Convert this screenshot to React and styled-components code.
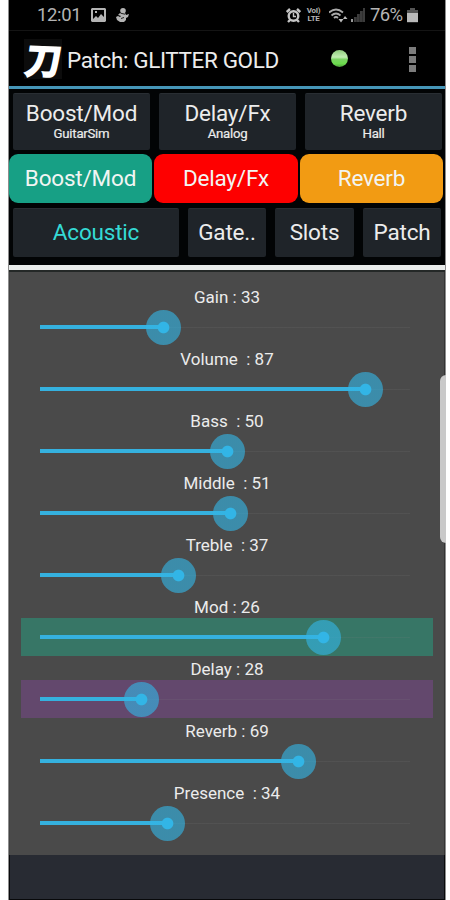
import React from "react";
import styled, { createGlobalStyle } from "styled-components";

const Global = createGlobalStyle`
  *, *::before, *::after { box-sizing: border-box; }
  html, body { margin: 0; padding: 0; background: #fff; }
  body { font-family: Roboto, "Liberation Sans", sans-serif; color: #ececec; overflow: hidden; }
`;

const Page = styled.div`
  width: 450px;
  height: 900px;
  padding: 0 4px 0 8px;
  overflow: hidden;
`;

const Phone = styled.main`
  position: relative;
  height: 900px;
  background: #000;
  border-left: 1px solid #8d8d8d;
  border-right: 1px solid #8d8d8d;
  display: flex;
  flex-direction: column;
`;

const StatusBar = styled.header`
  height: 31px;
  flex: none;
  display: flex;
  align-items: center;
  padding: 0 27px 0 28px;
  border-bottom: 1px solid #141414;
  color: #b4b4b4;
`;

const Clock = styled.span`
  width: 54px;
  font-size: 18.5px;
  line-height: 30px;
  letter-spacing: -0.35px;
`;

const StatusIcon = styled.svg`
  display: block;
  flex: none;
  width: ${(p) => p.$w}px;
  height: ${(p) => p.$h}px;
  margin-right: ${(p) => p.$gap || 0}px;
`;

const Spacer = styled.div`
  flex: 1;
`;

const Volte = styled.div`
  width: 15px;
  margin: 0 8px 0 5px;
  font-size: 8px;
  line-height: 8px;
  font-weight: 700;
  text-align: center;
  letter-spacing: -0.3px;
  white-space: nowrap;
`;

const Battery = styled.span`
  width: 33px;
  margin: 0 4px 0 5px;
  font-size: 18.5px;
  line-height: 30px;
  letter-spacing: -0.7px;
  white-space: nowrap;
`;

const TitleBar = styled.div`
  height: 58px;
  flex: none;
  display: flex;
  align-items: center;
  padding: 0 29px 0 15px;
  border-bottom: 3px solid #4696b8;
`;

const Logo = styled.div`
  width: 38px;
  height: 40px;
  background: #0c0c0c;
  display: flex;
  align-items: center;
  justify-content: center;
`;

const Kanji = styled.span`
  font-family: "Noto Sans CJK JP", sans-serif;
  font-weight: 700;
  font-size: 36px;
  line-height: 54px;
  color: #fff;
  -webkit-text-stroke: 1.6px #fff;
  paint-order: stroke;
  transform: translate(1px, -1px) skewX(-6deg) rotate(2deg);
`;

const Title = styled.h1`
  margin: 2px 0 0 5px;
  width: 264px;
  font-size: 22.5px;
  font-weight: 400;
  letter-spacing: -0.38px;
  white-space: nowrap;
`;

const Led = styled.div`
  width: 17px;
  height: 17px;
  border-radius: 50%;
  background: linear-gradient(#8fcb7d 0%, #c2eeb2 42%, #7bd363 55%, #6cdc4d 80%, #4f9d3e 100%);
`;

const Menu = styled.button`
  margin: 1px 0 0 auto;
  padding: 0;
  border: 0;
  background: none;
  display: grid;
  gap: 2px;
`;

const Dot = styled.i`
  width: 7px;
  height: 7px;
  background: #7c7c7c;
`;

const Toolbar = styled.nav`
  flex: none;
  height: 176px;
  padding-top: 4px;
  background: #020405;
`;

const ButtonRow = styled.div`
  display: grid;
  grid-template-columns: ${(p) => p.$columns};
  column-gap: ${(p) => p.$gap}px;
  height: ${(p) => p.$height}px;
  margin: ${(p) => p.$margin};
`;

const Button = styled.button`
  display: flex;
  flex-direction: column;
  align-items: center;
  justify-content: center;
  min-width: 0;
  padding: 0 0 2px;
  border: 0;
  border-top: 1px solid #292e33;
  border-radius: 2px;
  background: #1f2429;
  color: ${(p) => p.$color || "#ececec"};
  font: 400 22.5px/25px Roboto, sans-serif;
  letter-spacing: -0.2px;
  white-space: nowrap;
`;

const EffectButton = styled(Button)`
  padding: 0;
  border: 0;
  border-radius: 9px;
  background: ${(p) => p.$bg};
  color: #f2f5f3;
`;

const Caption = styled.small`
  font-size: 13.2px;
  line-height: 16px;
  letter-spacing: -0.25px;
  -webkit-text-stroke: 0.2px currentColor;
`;

const Divider = styled.div`
  flex: none;
  height: 7px;
  background: #e9eceb;
  border-bottom: 2px solid #242827;
`;

const Panel = styled.section`
  flex: none;
  height: 583px;
  padding: 12px 11px 0;
  background: #4a4a4a;
  border-right: 1px solid #333;
  border-left: 1px solid #424242;
`;

const Label = styled.div`
  height: 24px;
  padding-top: 2px;
  font-size: 17px;
  line-height: 22px;
  text-align: center;
  white-space: pre;
`;

const SliderBand = styled.div`
  height: 38px;
  padding: 0 19px;
  display: flex;
  align-items: center;
  background: ${(p) => p.$bg || "transparent"};
`;

const Track = styled.div`
  position: relative;
  flex: none;
  width: 374px;
  height: 4px;
  background: linear-gradient(rgba(128, 128, 128, 0.14), rgba(128, 128, 128, 0.14)) 0 50% / 370px 1px no-repeat;
`;

const Fill = styled.div`
  height: 4px;
  background: #35b1df;
`;

const Thumb = styled.div`
  position: absolute;
  top: -15px;
  width: 35px;
  height: 35px;
  margin-left: -17.5px;
  border-radius: 50%;
  background: radial-gradient(circle, #32b5e6 5.3px, rgba(51, 181, 229, 0.62) 6.3px);
`;

const Footer = styled.footer`
  flex: 1;
  background: #282b33;
  border: 1px solid #08090b;
  border-top: 0;
`;

const EdgeHandle = styled.div`
  position: absolute;
  top: 375px;
  right: -1px;
  width: 6px;
  height: 168px;
  border-radius: 6px 0 0 6px;
  background: #c9c9c9;
`;

const effects = [
  { name: "Boost/Mod", type: "GuitarSim", color: "#17a085" },
  { name: "Delay/Fx", type: "Analog", color: "#fe0000" },
  { name: "Reverb", type: "Hall", color: "#f29b13" },
];

const controls = [
  { label: "Gain : 33", at: 33 },
  { label: "Volume  : 87", at: 87 },
  { label: "Bass  : 50", at: 50 },
  { label: "Middle  : 51", at: 51 },
  { label: "Treble  : 37", at: 37 },
  { label: "Mod : 26", at: 75.9, band: "#377666" },
  { label: "Delay : 28", at: 27.2, band: "#63486d" },
  { label: "Reverb : 69", at: 69 },
  { label: "Presence  : 34", at: 34 },
];

function Slider({ label, at, band }) {
  return (
    <div>
      <Label>{label}</Label>
      <SliderBand $bg={band}>
        <Track>
          <Fill style={{ width: `${at}%` }} />
          <Thumb style={{ left: `${at}%` }} />
        </Track>
      </SliderBand>
    </div>
  );
}

export default function App() {
  return (
    <Page>
      <Global />
      <Phone>
        <StatusBar>
          <Clock>12:01</Clock>
          <StatusIcon $w={15} $h={14} $gap={10} viewBox="0 0 15 14">
            <path fill="#b4b4b4" fillRule="evenodd" d="M1 0h13l1 1v12l-1 1H1l-1-1V1zM2 2v9l3-3 2 2 3-4 3 3V2zM4 3h2v2H4z" />
          </StatusIcon>
          <StatusIcon $w={13} $h={14} viewBox="0 0 13 14">
            <g fill="#b4b4b4">
              <circle cx="7" cy="2.8" r="2.8" />
              <path d="M4 5h5l1 2 3-1-1 3-2 1v2l-2 2H4l-3-2-1-3 2-1 2 1 1-1-3-1z" />
            </g>
            <path d="M4.5 5.2l4.5 1M5 10.5l3-1" stroke="#222" strokeWidth="1" />
          </StatusIcon>
          <Spacer />
          <StatusIcon $w={15} $h={15} viewBox="0 0 15 15">
            <g fill="none" stroke="#c4c4c4" strokeWidth="2.4">
              <circle cx="7.5" cy="8" r="4.8" />
              <path d="M.8 4L4 1M14.2 4L11 1M2 14l2.5-2.5M13 14l-2.5-2.5" />
              <path d="M7.5 5v3.5H10" strokeWidth="1.4" />
            </g>
          </StatusIcon>
          <Volte>VoI)<br />LTE</Volte>
          <StatusIcon $w={19} $h={15} $gap={3} viewBox="0 0 19 15">
            <g fill="none" stroke="#aaa" strokeWidth="1.8">
              <path d="M0 4.5Q7-1.5 14 4.5M2.5 7.5Q7 3.5 11.5 7.5M5 10Q7 8 9 10" />
            </g>
            <path fill="#bbb" d="M9.5 11h5l-2.5 3.5zM14 11l2-3 2.5 3z" />
          </StatusIcon>
          <StatusIcon $w={14} $h={14} viewBox="0 0 14 14">
            <path d="M0 11h2v3H0z" fill="#999" />
            <path d="M3 9h2.8v5H3zM6 6h2.8v8H6zM9 3h2.8v11H9zM12 0h2v14h-2z" fill="#3c3c3c" />
          </StatusIcon>
          <Battery>76%</Battery>
          <StatusIcon $w={11} $h={15} viewBox="0 0 11 15">
            <path d="M3 0h5v2h3v3H0V2h3z" fill="#555" />
            <path d="M0 5h11v9.2H0z" fill="#bababa" />
          </StatusIcon>
        </StatusBar>

        <TitleBar>
          <Logo><Kanji>刀</Kanji></Logo>
          <Title>Patch: GLITTER GOLD</Title>
          <Led />
          <Menu aria-label="More options"><Dot /><Dot /><Dot /></Menu>
        </TitleBar>

        <Toolbar>
          <ButtonRow $columns="137px 137px 137px" $gap={9} $height={57} $margin="0 4px 4px">
            {effects.map((e) => (
              <Button key={e.name}>
                {e.name}
                <Caption>{e.type}</Caption>
              </Button>
            ))}
          </ButtonRow>
          <ButtonRow $columns="143px 144px 143px" $gap={2} $height={49} $margin="0 0 5px">
            {effects.map((e) => (
              <EffectButton key={e.name} $bg={e.color}>{e.name}</EffectButton>
            ))}
          </ButtonRow>
          <ButtonRow $columns="166px 78px 79px 78px" $gap={9} $height={49} $margin="0 4px">
            <Button $color="#35dad5">Acoustic</Button>
            <Button>Gate..</Button>
            <Button>Slots</Button>
            <Button>Patch</Button>
          </ButtonRow>
        </Toolbar>

        <Divider />

        <Panel>
          {controls.map((c) => <Slider key={c.label} {...c} />)}
        </Panel>

        <Footer />
        <EdgeHandle />
      </Phone>
    </Page>
  );
}
